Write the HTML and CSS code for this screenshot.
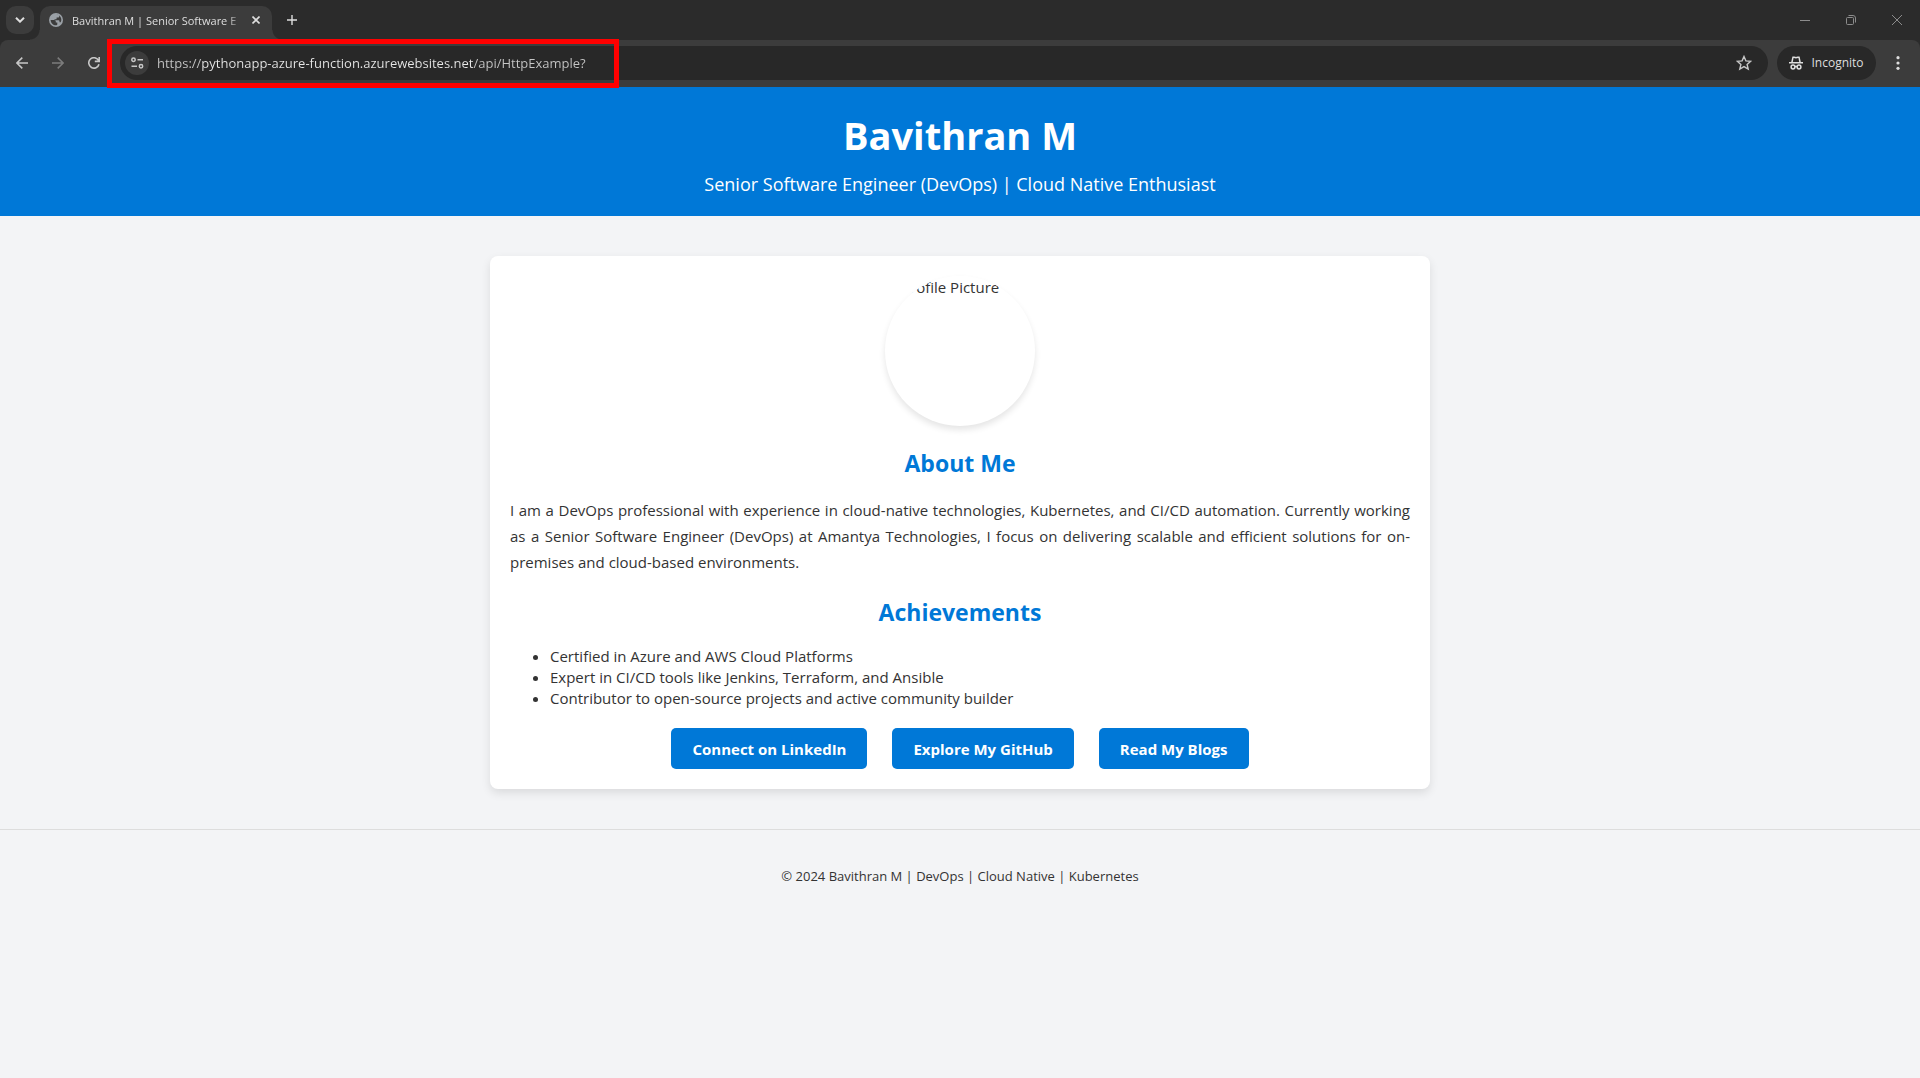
FILE: index.html
```
<!DOCTYPE html>
<html lang="en">
<head>
<meta charset="utf-8">
<meta name="viewport" content="width=device-width, initial-scale=1">
<title>Bavithran M | Senior Software E</title>
<link rel="stylesheet" href="styles.css">
</head>
<body>
<div class="browser">
  <div class="tabstrip">
    <button class="tab-search" aria-label="Search tabs">
      <svg width="10" height="6" viewBox="0 0 10 6" fill="none" stroke="currentColor" stroke-width="2"><path d="M1 .8 5 4.7 9 .8"/></svg>
    </button>
    <div class="tab">
      <svg class="favicon" width="14" height="14" viewBox="0 0 14 14"><circle cx="7" cy="7" r="7" fill="#9aa0a6"/><path fill="#3c3c3c" d="M1.6 7h3.2c1.300 0 2 .7 2 1.700v.9h1.500v1.700c0 .6-.5.900-1.200 1-3 0-5.400-2.400-5.500-5.300zM7.400 1.500c.9 0 2 .3 2.800.9v1c0 .6-.5 1-1.100 1H7.600v1c0 .5-.4.900-.9.900H5.500v1h3.800c.8 0 1.200.5 1.200 1.200v.800h1.200c.5-1 .7-2 .600-3-.2-2.500-2.300-4.800-4.900-4.800z"/></svg>
      <span class="tab-title">Bavithran M | Senior Software E</span>
      <button class="icon-btn tab-close" aria-label="Close tab">
        <svg width="8" height="8" viewBox="0 0 8 8" stroke="currentColor" stroke-width="1.600"><path d="m.5.5 7 7m0-7-7 7"/></svg>
      </button>
    </div>
    <button class="icon-btn new-tab" aria-label="New tab">
      <svg width="10" height="10" viewBox="0 0 10 10" stroke="currentColor" stroke-width="1.400"><path d="M5 0v10M0 5h10"/></svg>
    </button>
    <div class="window-controls">
      <button class="icon-btn" aria-label="Minimize"><svg width="10" height="10" viewBox="0 0 10 10" stroke="currentColor"><path d="M0 5.500h10"/></svg></button>
      <button class="icon-btn" aria-label="Restore"><svg width="10" height="10" viewBox="0 0 10 10" fill="none" stroke="currentColor"><rect x=".5" y="2.500" width="7" height="7" rx="1"/><path d="M2.500.5H7A2.500 2.500 0 0 1 9.500 3v4.500"/></svg></button>
      <button class="icon-btn" aria-label="Close"><svg width="10" height="10" viewBox="0 0 10 10" stroke="currentColor"><path d="m0 0 10 10M10 0 0 10"/></svg></button>
    </div>
  </div>
  <div class="toolbar">
    <div class="nav">
      <button class="icon-btn" aria-label="Back"><svg width="12" height="12" viewBox="0 0 12 12" fill="none" stroke="currentColor" stroke-width="1.500"><path d="M12 6H1M6.300.6.900 6l5.400 5.400"/></svg></button>
      <button class="icon-btn" aria-label="Forward" disabled><svg width="12" height="12" viewBox="0 0 12 12" fill="none" stroke="currentColor" stroke-width="1.500"><path d="M0 6h11M5.700.6 11.100 6l-5.400 5.400"/></svg></button>
      <button class="icon-btn" aria-label="Reload"><svg width="12" height="12" viewBox="0 0 12 12" fill="none" stroke="currentColor" stroke-width="1.600"><path d="M11 7.200A5.200 5.200 0 1 1 10.400 3.200L11 4.300M11.200 0v4.400H6.800"/></svg></button>
    </div>
    <div class="omnibox">
      <div class="address">
        <button class="icon-btn site-info" aria-label="View site information"><svg width="13" height="12" viewBox="0 0 13 12" fill="none" stroke="currentColor" stroke-width="1.500"><circle cx="2.500" cy="2.700" r="1.700"/><path d="M6.500 2.700H12M.5 9.200H6"/><circle cx="10" cy="9.200" r="1.700"/></svg></button>
        <input class="url" type="text" aria-label="Address" value="https://pythonapp-azure-function.azurewebsites.net/api/HttpExample?">
        <span class="highlight"></span>
      </div>
      <button class="icon-btn" aria-label="Bookmark this tab"><svg width="16" height="16" viewBox="0 0 16 16" fill="none" stroke="currentColor" stroke-width="1.400"><path d="m8 1.500 1.900 4.400 4.800.4-3.600 3.100 1.100 4.700L8 11.600l-4.200 2.500 1.100-4.700L1.300 6.300l4.800-.4z"/></svg></button>
    </div>
    <button class="incognito">
      <svg width="14" height="14" viewBox="0 0 14 14" fill="none" stroke="currentColor" stroke-width="1.500"><path d="M0 6.800h14M2.900 6.500 4 1.200h1.200L7 1.800l1.800-.6H10l1.100 5.300"/><circle cx="4" cy="11" r="1.900"/><circle cx="10" cy="11" r="1.900"/><path d="M6 10.600h2"/></svg>
      <span>Incognito</span>
    </button>
    <button class="icon-btn menu" aria-label="Menu"><svg width="4" height="14" viewBox="0 0 4 14" fill="currentColor"><circle cx="2" cy="1.700" r="1.600"/><circle cx="2" cy="7" r="1.600"/><circle cx="2" cy="12.300" r="1.600"/></svg></button>
  </div>
</div>

<header class="hero">
  <h1>Bavithran M</h1>
  <p>Senior Software Engineer (DevOps) | Cloud Native Enthusiast</p>
</header>

<main class="card">
  <div class="avatar" role="img" aria-label="Profile Picture">Profile Picture</div>
  <h2>About Me</h2>
  <p class="about">I am a DevOps professional with experience in cloud-native technologies, Kubernetes, and CI/CD automation. Currently working as a Senior Software Engineer (DevOps) at Amantya Technologies, I focus on delivering scalable and efficient solutions for on-premises and cloud-based environments.</p>
  <h2>Achievements</h2>
  <ul class="achievements">
    <li>Certified in Azure and AWS Cloud Platforms</li>
    <li>Expert in CI/CD tools like Jenkins, Terraform, and Ansible</li>
    <li>Contributor to open-source projects and active community builder</li>
  </ul>
  <div class="links">
    <a href="#linkedin">Connect on LinkedIn</a>
    <a href="#github">Explore My GitHub</a>
    <a href="#blogs">Read My Blogs</a>
  </div>
</main>

<footer class="footer">
  <p>© 2024 Bavithran M | DevOps | Cloud Native | Kubernetes</p>
</footer>
</body>
</html>
```
FILE: styles.css
```
* {
  box-sizing: border-box;
}

body {
  margin: 0;
  min-height: 100vh;
  background: #f3f4f6;
  color: #333;
  font-family: "Open Sans", "Noto Sans", sans-serif;
  font-size: 15px;
  line-height: 21px;
}

button {
  padding: 0;
  border: 0;
  background: none;
  color: inherit;
  font: inherit;
}

svg {
  display: block;
  flex: none;
}

h1,
h2,
p,
ul {
  margin: 0;
}

/* Browser window */
.browser {
  background: #2b2b2b;
  color: #dedede;
  font-size: 12px;
}

.tabstrip {
  display: flex;
  align-items: center;
  height: 40px;
  padding-left: 6px;
}

.tab-search {
  display: grid;
  place-items: center;
  width: 28px;
  height: 28px;
  border-radius: 10px;
  background: #3c3c3c;
}

.icon-btn {
  display: grid;
  flex: none;
  place-items: center;
  width: 28px;
  height: 28px;
  border-radius: 50%;
}

.tab {
  position: relative;
  display: flex;
  align-self: flex-end;
  align-items: center;
  width: 232px;
  height: 34px;
  margin-left: 6px;
  padding: 0 2px 6px 9px;
  border-radius: 10px 10px 0 0;
  background: #3c3c3c;
}

/* Flared feet joining the tab to the toolbar */
.tab::before,
.tab::after {
  content: "";
  position: absolute;
  bottom: 0;
  width: 10px;
  height: 10px;
}

.tab::before {
  right: 100%;
  background: radial-gradient(circle at 0 0, transparent 9px, #3c3c3c 10px);
}

.tab::after {
  left: 100%;
  background: radial-gradient(circle at 100% 0, transparent 9px, #3c3c3c 10px);
}

.tab-title {
  flex: 1;
  min-width: 0;
  margin-left: 9px;
  white-space: nowrap;
  font-size: 11px;
  -webkit-mask-image: linear-gradient(to right, #000 92%, transparent);
  mask-image: linear-gradient(to right, #000 92%, transparent);
}

.new-tab {
  margin-left: 6px;
}

.window-controls {
  display: flex;
  margin-left: auto;
  color: #8c8c8c;
}

.window-controls .icon-btn {
  width: 46px;
}

.toolbar {
  display: flex;
  align-items: center;
  height: 47px;
  padding: 0 8px 2px;
  border-radius: 8px 8px 0 0;
  background: #3c3c3c;
}

.nav {
  display: flex;
  gap: 8px;
  margin-right: 12px;
  color: #c7c7c7;
}

.nav .icon-btn:disabled {
  color: #7c7c7c;
}

.omnibox {
  display: flex;
  flex: 1;
  align-items: center;
  height: 34px;
  padding-right: 10px;
  border-radius: 17px;
  background: #282828;
  color: #c7c7c7;
}

.address {
  position: relative;
  display: flex;
  flex: 1;
  align-items: center;
  height: 34px;
  padding-left: 5px;
}

.site-info {
  width: 24px;
  height: 24px;
  background: #3c3c3c;
}

.url {
  flex: 1;
  min-width: 0;
  height: 24px;
  margin-left: 8px;
  padding: 0;
  border: 0;
  outline: 0;
  background: linear-gradient(to right, #c7c7c7 44px, #e8e8e8 44px 316px, #c7c7c7 316px);
  -webkit-background-clip: text;
  background-clip: text;
  color: #e8e8e8;
  -webkit-text-fill-color: transparent;
  font-family: inherit;
  font-size: 13px;
}

/* Red annotation frame over the address */
.highlight {
  position: absolute;
  top: -7px;
  left: -13px;
  width: 512px;
  height: 49px;
  border: 5px solid #f00;
  pointer-events: none;
}

.incognito {
  display: flex;
  align-items: center;
  justify-content: center;
  gap: 8px;
  width: 99px;
  height: 34px;
  margin-left: 9px;
  border-radius: 17px;
  background: #282828;
}

.menu {
  margin-left: 8px;
}

/* Page */
.hero {
  padding: 21px 20px 19px;
  background: #0078d7;
  color: #fff;
  text-align: center;
}

.hero h1 {
  font-size: 38px;
  line-height: 54px;
}

.hero p {
  margin-top: 9px;
  font-size: 18px;
  line-height: 26px;
}

.card {
  max-width: 940px;
  margin: 40px auto;
  padding: 20px;
  border-radius: 8px;
  background: #fff;
  box-shadow: 0 4px 10px rgba(0, 0, 0, 0.1);
}

.avatar {
  width: 150px;
  height: 150px;
  margin: 0 auto;
  padding-left: 16px;
  overflow: hidden;
  border-radius: 50%;
  box-shadow: 0 4px 6px rgba(0, 0, 0, 0.1);
  line-height: 23px;
}

.card h2 {
  margin: 21px 0 18px;
  color: #0078d7;
  font-size: 23px;
  line-height: 32px;
  text-align: center;
}

.about {
  line-height: 26px;
  text-align: justify;
}

.achievements {
  margin-bottom: 19px;
  padding-left: 40px;
}

.links {
  display: flex;
  flex-wrap: wrap;
  justify-content: center;
  gap: 25px;
}

.links a {
  padding: 11px 21px 9px;
  border-radius: 5px;
  background: #0078d7;
  color: #fff;
  font-weight: 700;
  text-decoration: none;
}

.footer {
  padding: 36px 20px;
  border-top: 1px solid #ddd;
  font-size: 13px;
  text-align: center;
}
```
